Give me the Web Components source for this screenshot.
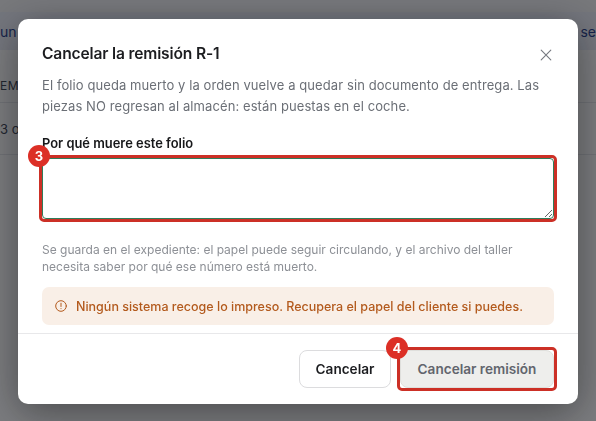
<!doctype html>
<html lang="es">
<head>
<meta charset="utf-8">
<title>Cancelar remisión</title>
<style>
  html,body{ margin:0; height:100%; overflow:hidden; background:#fff; }
  body{ font-family:Inter,"Liberation Sans",sans-serif; }
</style>
</head>
<body>
<page-behind></page-behind>
<modal-backdrop>
  <cancel-dialog heading="Cancelar la remisión R-1">
    <p slot="lead">El folio queda muerto y la orden vuelve a quedar sin documento de entrega. Las piezas NO regresan al almacén: están puestas en el coche.</p>
    <reason-field slot="field" label="Por qué muere este folio"
      hint="Se guarda en el expediente: el papel puede seguir circulando, y el archivo del taller necesita saber por qué ese número está muerto."></reason-field>
    <warn-note slot="note">Ningún sistema recoge lo impreso. Recupera el papel del cliente si puedes.</warn-note>
    <action-btn slot="actions">Cancelar</action-btn>
    <step-mark slot="actions" n="4" class="btn-mark"><action-btn kind="disabled">Cancelar remisión</action-btn></step-mark>
  </cancel-dialog>
</modal-backdrop>

<script>
// page behind the overlay, only a few scraps show
class PageBehind extends HTMLElement{
  constructor(){
    super()
    this.attachShadow({mode:'open'}).innerHTML = `
      <style>
        :host{ display:block; height:100vh; background:#fff; font-size:13px; color:#374151; overflow:hidden; }
        .top{ height:12px; background:#f6f6f7; }
        .note{ height:38px; background:#eef1fb; color:#1e3a8a; display:flex; justify-content:space-between; align-items:center; font-size:14px; }
        .head{ height:52px; border-bottom:1px solid #e5e7eb; display:flex; align-items:center; font-size:12px; letter-spacing:.6px; color:#374151; }
        .head span{ margin:18px 0 0 0 }
        .row{ height:51px; border-bottom:1px solid #e5e7eb; display:flex; align-items:center; font-size:13px; }
      </style>
      <div class="top"></div>
      <div class="note"><span>un</span><span>, se</span></div>
      <div class="head"><span>EM</span></div>
      <div class="row"><span>3 o</span></div>`
  }
}

class ModalBackdrop extends HTMLElement{
  constructor(){
    super()
    this.attachShadow({mode:'open'}).innerHTML = `
      <style>
        :host{
          position:fixed; inset:0; display:flex; align-items:flex-start; justify-content:center; padding-top:19px; box-sizing:border-box;
          background:rgba(17,19,24,.55);
        }
      </style>
      <slot></slot>`
  }
}

class CancelDialog extends HTMLElement{
  constructor(){
    super()
    this.attachShadow({mode:'open'}).innerHTML = `
      <style>
        :host{
          display:block; width:560px; height:385px; box-sizing:border-box; background:#fff; border-radius:10px;
          box-shadow:0 8px 40px rgba(0,0,0,.42);
          color:#1c1d20;
        }
        .head{ display:flex; justify-content:space-between; align-items:center; padding:25px 24px 0; height:20px; }
        h2{ margin:0; font-size:15.6px; font-weight:600; line-height:20px; letter-spacing:-.01em; }
        .x{ display:block; width:12px; height:12px; margin:1px 2px 0 0; }
        .body{ padding:11px 24px 0; }
        ::slotted(p){ margin:0; font-size:13px; line-height:21px; letter-spacing:.09px; color:#6b6f76; }
        .foot{ margin-top:8px; border-top:1px solid #e8e8ea; padding:16px 24px 0; display:flex; justify-content:flex-end; gap:9px; }
      </style>
      <div class="head">
        <h2></h2>
        <svg class="x" viewBox="0 0 12 12" fill="none" stroke="#75787f" stroke-width="1.1" stroke-linecap="round"><path d="M1.2 1.2l9.6 9.6M10.800 1.200l-9.600 9.600"/></svg>
      </div>
      <div class="body">
        <slot name="lead"></slot>
        <slot name="field"></slot>
        <slot name="note"></slot>
      </div>
      <div class="foot"><slot name="actions"></slot></div>`
    this.shadowRoot.querySelector('h2').textContent = this.getAttribute('heading')
  }
}

class StepMark extends HTMLElement{
  constructor(){
    super()
    this.attachShadow({mode:'open'}).innerHTML = `
      <style>
        :host{ display:block; position:relative; border-radius:4px; }
        .ring{ position:absolute; inset:-3px; border:3px solid #cc3026; border-radius:5px; pointer-events:none; }
        .num{
          position:absolute; left:-14px; top:-13px; width:22px; height:22px; border-radius:50%;
          background:#dc2f26; color:#fff; font-size:13px; font-weight:700; line-height:22px; text-align:center;
        }
      </style>
      <slot></slot>
      <div class="ring"></div>
      <div class="num"></div>`
    this.shadowRoot.querySelector('.num').textContent = this.getAttribute('n')
  }
}

class ReasonField extends HTMLElement{
  constructor(){
    super()
    this.attachShadow({mode:'open'}).innerHTML = `
      <style>
        :host{ display:block; margin-top:19px; }
        label{ display:block; font-size:12.9px; font-weight:600; line-height:16px; color:#17181a; margin-bottom:6px; }
        textarea{
          display:block; width:100%; height:61px; box-sizing:border-box; margin:0; padding:8px;
          border:1px solid #2f7d5b; border-radius:4px; background:#fff; outline:none; resize:vertical;
          font:13px Inter,sans-serif;
        }
        .hint{ margin:22px 0 0; font-size:12px; line-height:17px; color:#8d9096; }
      </style>
      <label></label>
      <step-mark n="3"><textarea></textarea></step-mark>
      <p class="hint"></p>`
    this.shadowRoot.querySelector('label').textContent = this.getAttribute('label')
    this.shadowRoot.querySelector('.hint').textContent = this.getAttribute('hint')
  }
}

class WarnNote extends HTMLElement{
  constructor(){
    super()
    this.attachShadow({mode:'open'}).innerHTML = `
      <style>
        :host{
          display:flex; align-items:center; gap:9px; margin-top:12px; height:38px; padding:0 13px; box-sizing:border-box;
          background:#f9efe7; border-radius:7px; color:#b35a1d; font-size:12.500px; font-weight:500;
        }
        svg{ width:12px; height:12px; flex:none; }
      </style>
      <svg viewBox="0 0 12 12" fill="none" stroke="#b35a1d" stroke-width="1" stroke-linecap="round">
        <circle cx="6" cy="6" r="5.300"/><path d="M6 3.200v3.300M6 8.600v.1"/>
      </svg>
      <slot></slot>`
  }
}

class ActionBtn extends HTMLElement{
  constructor(){
    super()
    this.attachShadow({mode:'open'}).innerHTML = `
      <style>
        :host{
          display:flex; align-items:center; justify-content:center; box-sizing:border-box; height:38px; width:92px;
          border:1px solid #dcdcde; border-radius:8px; background:#fff; color:#1c1d20;
          font-size:13.6px; font-weight:600; white-space:nowrap;
        }
        :host([kind=disabled]){ background:#eeeeec; color:#62656d; border-color:#dfdfdc; width:154px; }
      </style>
      <slot></slot>`
  }
}

customElements.define('step-mark', StepMark)
customElements.define('page-behind', PageBehind)
customElements.define('modal-backdrop', ModalBackdrop)
customElements.define('cancel-dialog', CancelDialog)
customElements.define('reason-field', ReasonField)
customElements.define('warn-note', WarnNote)
customElements.define('action-btn', ActionBtn)
</script>
</body>
</html>
